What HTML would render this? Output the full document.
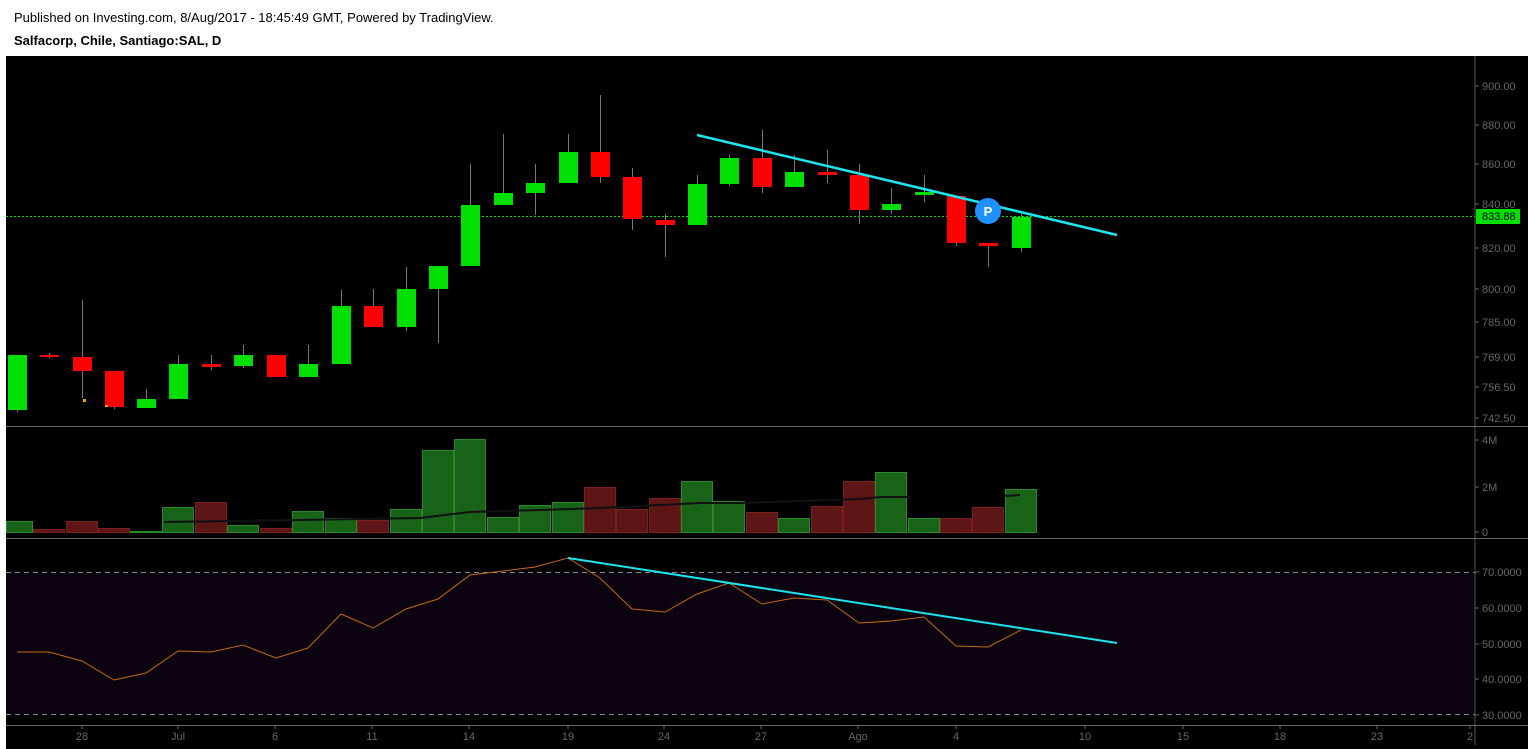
<!DOCTYPE html>
<html><head><meta charset="utf-8"><style>
html,body{margin:0;padding:0;background:#fff;width:1533px;height:749px;overflow:hidden;font-family:"Liberation Sans",Arial,sans-serif}
.h1{position:absolute;left:14px;top:10px;font-size:13px;color:#000}
.h2{position:absolute;left:14px;top:33px;font-size:13px;font-weight:bold;color:#000}
svg{position:absolute;left:0;top:0}
</style></head><body>
<div class="h1">Published on Investing.com, 8/Aug/2017 - 18:45:49 GMT, Powered by TradingView.</div>
<div class="h2">Salfacorp, Chile, Santiago:SAL, D</div>
<svg id="s" width="1533" height="749" xmlns="http://www.w3.org/2000/svg" font-family="Liberation Sans, Arial, sans-serif"></svg>
<script>
var s=document.getElementById('s'),h='';
h+='<rect x="6" y="56" width="1522" height="693" fill="#000"/>';
h+='<rect x="6" y="572" width="1469" height="142" fill="#0b0310"/>';
h+='<line x1="1475" y1="56" x2="1475" y2="745" stroke="#555"/>';
h+='<line x1="6" y1="426.5" x2="1528" y2="426.5" stroke="#666"/>';
h+='<line x1="6" y1="538.5" x2="1528" y2="538.5" stroke="#666"/>';
h+='<line x1="6" y1="725.5" x2="1528" y2="725.5" stroke="#666"/>';
h+='<line x1="6" y1="572.5" x2="1475" y2="572.5" stroke="#888" stroke-dasharray="5,4"/>';
h+='<line x1="6" y1="714.5" x2="1475" y2="714.5" stroke="#888" stroke-dasharray="5,4"/>';
var pl=[[900,86],[880,125],[860,164],[840,204],[820,248],[800,289],[785,322],[769,357],[756.5,387],[742.5,418]];
pl.forEach(function(p){var t=p[0].toFixed(2);h+='<line x1="1475" y1="'+p[1]+'" x2="1479" y2="'+p[1]+'" stroke="#666"/><text x="1482" y="'+(p[1]+4)+'" fill="#666" font-size="11">'+t+'</text>';});
[["4M",440],["2M",487],["0",532]].forEach(function(p){h+='<line x1="1475" y1="'+p[1]+'" x2="1479" y2="'+p[1]+'" stroke="#666"/><text x="1482" y="'+(p[1]+4)+'" fill="#666" font-size="11">'+p[0]+'</text>';});
[["70.0000",572],["60.0000",608],["50.0000",644],["40.0000",679],["30.0000",715]].forEach(function(p){h+='<line x1="1475" y1="'+p[1]+'" x2="1479" y2="'+p[1]+'" stroke="#666"/><text x="1482" y="'+(p[1]+4)+'" fill="#666" font-size="11">'+p[0]+'</text>';});
[["28",82],["Jul",178],["6",275],["11",372],["14",469],["19",568],["24",664],["27",761],["Ago",858],["4",956],["10",1085],["15",1183],["18",1280],["23",1377],["2",1470]].forEach(function(p){h+='<line x1="'+p[1]+'" y1="725" x2="'+p[1]+'" y2="729" stroke="#666"/><text x="'+p[1]+'" y="740" fill="#666" font-size="11" text-anchor="middle">'+p[0]+'</text>';});
h+='<line x1="6" y1="216.5" x2="1475" y2="216.5" stroke="#00e000" stroke-dasharray="2,2"/>';
h+='<rect x="1476" y="209" width="44" height="15" fill="#00e000"/><text x="1482" y="220" font-size="11" fill="#000">833.88</text>';
var c=[[17,'G',355,410,355,412],[49,'R',355,357,353,358],[82,'R',357,371,300,398],[114,'R',371,407,371,409],[146,'G',399,408,389,408],[178,'G',364,399,355,399],[211,'R',364,367,355,370],[243,'G',355,366,345,368],[276,'R',355,377,355,377],[308,'G',364,377,345,377],[341,'G',306,364,290,364],[373,'R',306,327,289,327],[406,'G',289,327,267,331],[438,'G',266,289,266,343],[470,'G',205,266,164,266],[503,'G',193,205,134,205],[535,'G',183,193,164,215],[568,'G',152,183,134,183],[600,'R',152,177,95,183],[632,'R',177,219,168,230],[665,'R',220,225,214,257],[697,'G',184,225,175,225],[729,'G',158,184,155,186],[762,'R',158,187,130,193],[794,'G',172,187,155,187],[827,'R',172,175,150,183],[859,'R',175,210,164,224],[891,'G',204,210,188,214],[924,'G',192,195,175,202],[956,'R',196,243,196,246],[988,'R',243,246,243,267],[1021,'G',217,248,214,252]];
var v=[521,529,521,528,531,507,502,525,528,511,518,520,509,450,439,517,505,502,487,509,498,481,501,512,518,506,481,472,518,518,507,489];
c.forEach(function(k,i){var col=k[1]=='G'?'#00e000':'#ff0000';
h+='<line x1="'+(k[0]+.5)+'" y1="'+k[4]+'" x2="'+(k[0]+.5)+'" y2="'+k[5]+'" stroke="#777"/>';
h+='<rect x="'+(k[0]-9)+'" y="'+k[2]+'" width="19" height="'+Math.max(2,k[3]-k[2])+'" fill="'+col+'"/>';
var vx=k[0]-16;if(i==0)vx=6;var w=i==0?27:32;
h+='<rect x="'+(vx+.5)+'" y="'+(v[i]+.5)+'" width="'+(w-1)+'" height="'+(532-v[i])+'" fill="'+(k[1]=='G'?'#186318':'#5e1515')+'" stroke="'+(k[1]=='G'?'#2a8a2a':'#7a2020')+'"/>';});
h+='<polyline points="164,522 300,520 420,518 470,512 540,510 600,508 700,503 740,503 800,501 860,499 880,497 910,497" fill="none" stroke="#111" stroke-width="2"/>';
h+='<polyline points="1005,496 1020,495" fill="none" stroke="#111" stroke-width="2"/>';
var r=[[17,652],[49,652],[82,661],[114,680],[146,673],[178,651],[211,652],[243,645],[276,658],[308,648],[341,614],[373,628],[406,609],[438,599],[470,575],[503,571],[535,567],[568,558],[600,578],[632,609],[665,612],[697,594],[729,583],[762,604],[794,598],[827,600],[859,623],[891,621],[924,617],[956,646],[988,647],[1021,630]];
h+='<polyline points="'+r.map(function(p){return p.join(',')}).join(' ')+'" fill="none" stroke="#c8690e" stroke-width="1"/>';
h+='<line x1="697" y1="135" x2="1117" y2="235" stroke="#19e6f0" stroke-width="2.5"/>';
h+='<line x1="568" y1="558" x2="1117" y2="643" stroke="#19e6f0" stroke-width="2"/>';
h+='<rect x="83" y="399" width="3" height="3" fill="#f5a000"/><rect x="105" y="405" width="3" height="2" fill="#f5a000"/>';
h+='<circle cx="988" cy="211" r="13" fill="#1e90ff"/><text x="988" y="216" fill="#fff" font-size="13" font-weight="bold" text-anchor="middle">P</text>';
s.innerHTML=h;
</script>
</body></html>
